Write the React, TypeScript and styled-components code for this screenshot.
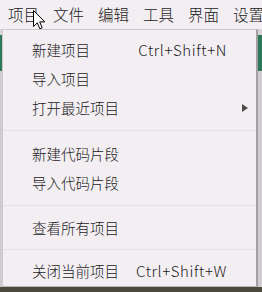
import styled, {createGlobalStyle} from 'styled-components'

const Global = createGlobalStyle`
    html, body {
        margin: 0;
        padding: 0;
        background: #f2eef2;
    }
    body {
        font-family: "Noto Sans CJK SC", "Noto Sans", sans-serif;
        font-weight: 300;
        color: #1b1b1b;
    }
`

const Window = styled.div`
    position: relative;
    width: 262px;
    height: 292px;
    overflow: hidden;
    background: #f2eef2;
`
const MenuBar = styled.div`
    display: flex;
    align-items: center;
    gap: 14px;
    height: 29px;
    padding-left: 8px;
    font-size: 15.5px;
    white-space: nowrap;
`
const BarItem = styled.div`
    line-height: 29px;
    padding-bottom: 1px;
`
const Backdrop = styled.div`
    height: 263px;
    padding-left: 2px;
    background: linear-gradient(
        to bottom,
        #d8d4d8 0px,
        #d8d4d8 6px,
        #2e785a 6px,
        #2e785a 42px,
        #cfcbcf 42px,
        #cfcbcf 258px,
        #4b4a3c 258px
    );
`
const Dropdown = styled.div`
    width: 256px;
    height: 258px;
    box-sizing: border-box;
    background: #f2eef2;
    border: 1px solid #cdc9cd;
    border-right: 2px solid #a39fa3;
    border-bottom: 1px solid #b9b5b9;
    padding-top: 5px;
    font-size: 14.5px;
`
const Row = styled.div`
    display: flex;
    align-items: center;
    height: 29px;
    padding-left: 29px;
    padding-right: 30px;
    white-space: nowrap;
`
const Label = styled.span`
    flex: 1;
`
const Shortcut = styled.span`
    font-size: 15px;
    letter-spacing: 0.6px;
    margin-right: -1px;
`
const Arrow = styled.span`
    width: 0;
    height: 0;
    margin-right: -22px;
    border-top: 4px solid transparent;
    border-bottom: 4px solid transparent;
    border-left: 6px solid #4a4a4a;
`
const Separator = styled.div<{$h: number}>`
    height: ${(p) => p.$h}px;
    display: flex;
    align-items: center;
    &::after {
        content: '';
        flex: 1;
        height: 1px;
        background: #e4e0e4;
    }
`
const Cursor = styled.svg`
    position: absolute;
    left: 33px;
    top: 10px;
`

const bar = ['项目', '文件', '编辑', '工具', '界面', '设置']

function App() {
    return (
        <Window>
            <Global />
            <MenuBar>
                {bar.map((b) => (
                    <BarItem key={b}>{b}</BarItem>
                ))}
            </MenuBar>
            <Backdrop>
                <Dropdown>
                    <Row>
                        <Label>新建项目</Label>
                        <Shortcut>Ctrl+Shift+N</Shortcut>
                    </Row>
                    <Row>
                        <Label>导入项目</Label>
                    </Row>
                    <Row>
                        <Label>打开最近项目</Label>
                        <Arrow />
                    </Row>
                    <Separator $h={17} />
                    <Row>
                        <Label>新建代码片段</Label>
                    </Row>
                    <Row>
                        <Label>导入代码片段</Label>
                    </Row>
                    <Separator $h={16} />
                    <Row>
                        <Label>查看所有项目</Label>
                    </Row>
                    <Separator $h={14} />
                    <Row>
                        <Label>关闭当前项目</Label>
                        <Shortcut>Ctrl+Shift+W</Shortcut>
                    </Row>
                </Dropdown>
            </Backdrop>
            <Cursor width="13" height="21" viewBox="0 0 13 21">
                <path
                    d="M0.5 0.5 L0.5 16.5 L4.3 12.8 L6.8 18.8 L9.2 17.8 L6.7 11.9 L11.8 11.9 Z"
                    fill="#ffffff"
                    stroke="#000000"
                    strokeWidth="1"
                    strokeLinejoin="round"
                />
            </Cursor>
        </Window>
    )
}
export default App
